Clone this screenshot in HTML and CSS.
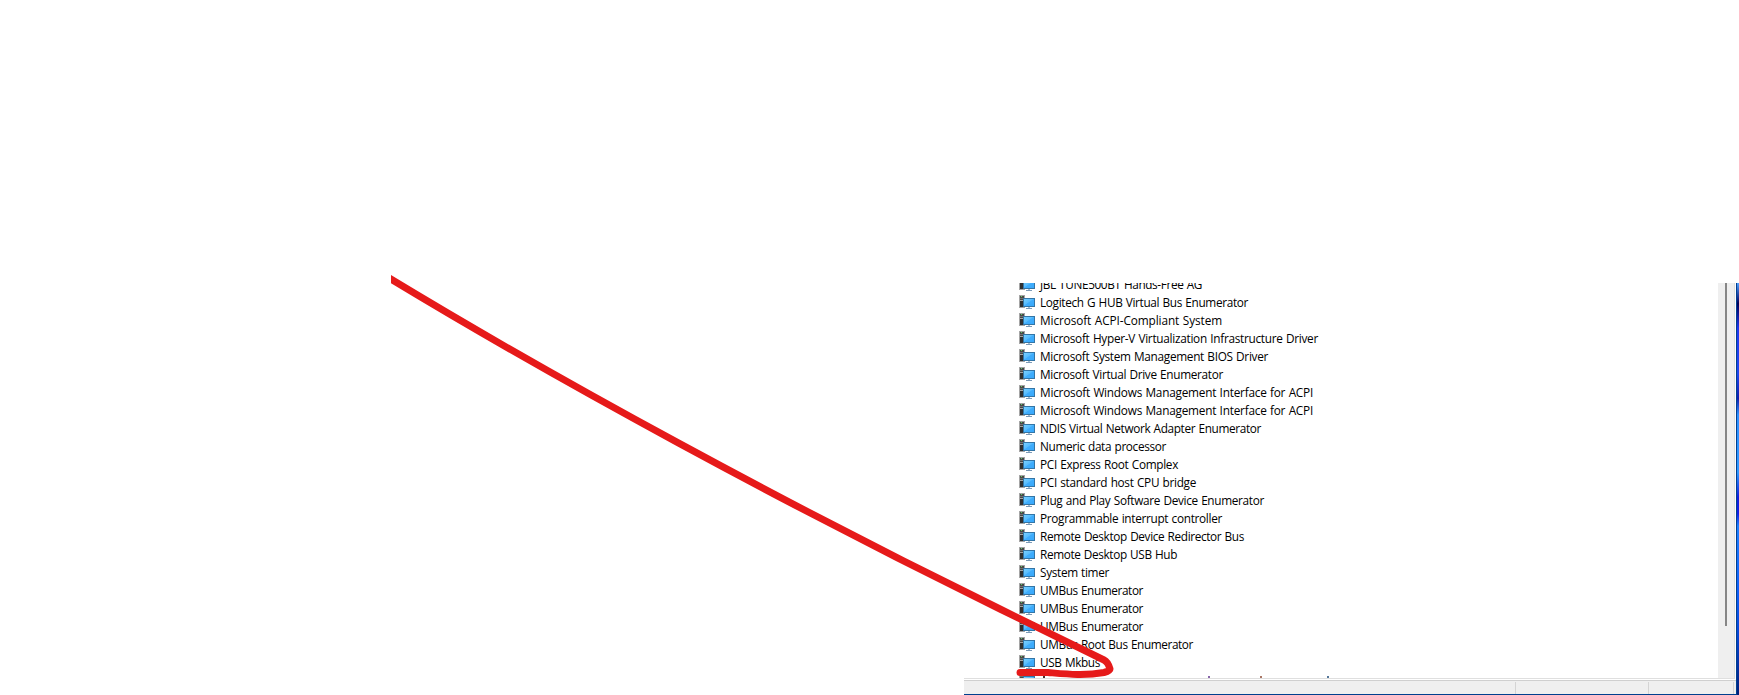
FILE: index.html
```html
<!DOCTYPE html>
<html lang="en"><head><meta charset="utf-8"><title>Device Manager</title><link rel="stylesheet" href="styles.css"></head>
<body>
<main class="canvas">
<svg class="defs" aria-hidden="true"><defs>
<linearGradient id="screen" x1="0" y1="0" x2="1" y2="1"><stop offset="0" stop-color="#78d0ff"/><stop offset=".45" stop-color="#58bcfd"/><stop offset=".5" stop-color="#40adfc"/><stop offset="1" stop-color="#38a8fb"/></linearGradient>
<symbol id="pc" viewBox="0 0 16 15"><path fill="#a5a5a5" d="M0 0h6v13H0z"/><path fill="#484848" d="M1 1h4v4H1z"/><path fill="#303030" d="M1 6h4v6H1z"/><path fill="#60d060" d="M2 1h1v1H2z"/><path fill="#707070" d="M1 3h4v1H1z"/><path fill="#3475a5" d="M4 3h12v9H4z"/><path fill="url(#screen)" d="M5 4h10v7H5z"/><path fill="#a9bdce" d="M9 12h2v1H9z"/><path fill="#7e9bb7" d="M7 13h6v1H7z"/></symbol>
</defs></svg>
<section class="window">
<div class="content">
<ul class="devices" id="devices"></ul>
<div class="scrollbar"><div class="thumb"></div></div>
</div>
<footer class="status"><span class="cell first"></span><span class="cell second"></span><span class="cell third"></span></footer>
</section>
<div class="wallpaper"></div>
<svg class="marker" viewBox="0 0 1739 695"><defs><clipPath id="edge"><path d="M391 0h1348v695H391z"/></clipPath></defs><path clip-path="url(#edge)" d="M380 272.500C560 382 790 506 1000 609L1104 660Q1108 662 1110 669Q1110 671 1104 672.500C1084 676 1066 674 1048 672.500L1020 672.500"/></svg>
</main>
<script src="app.js"></script>
</body></html>
```
FILE: styles.css
```css
body{margin:0;background:#fff;font-family:"Open Sans","Noto Sans",sans-serif}
.canvas{position:relative;box-sizing:border-box;width:1739px;height:695px;padding-top:283px;display:flex;justify-content:flex-end;overflow:hidden}
.defs{position:absolute;width:0;height:0}
.window{width:772px;height:412px;box-sizing:border-box;display:flex;flex-direction:column;border-bottom:1px solid #003f8e;background:#fff}
.content{height:396px;flex:none;margin-right:1px;box-sizing:border-box;display:flex;justify-content:space-between;overflow:hidden;border-right:1px solid #dfdfdf;border-bottom:1px solid #dfdfdf}
.devices{list-style:none;margin:-8px 0 0 55px;padding:0}
.device{height:18px;display:flex;align-items:center;gap:5px}
.icon{width:16px;height:15px;flex:none;margin-top:1px}
.name{font-size:11.8px;word-spacing:.6px;line-height:18px;white-space:nowrap;color:#000}
.peaks{width:300px;height:18px;flex:none}
.scrollbar{width:16px;background:#efefef}
.thumb{width:2px;height:343px;margin-left:7px;background:#868686}
.status{height:14px;margin-top:1px;flex:none;border-top:1px solid #cfcfcf;background:#efefef;display:flex;padding-top:1px;box-sizing:border-box}
.cell{box-sizing:border-box;border-right:1px solid #d4d4d4}
.first{width:552px}.second{width:133px}.third{width:85px}
.wallpaper{width:3px;border-left:1px solid #003f8e;box-sizing:border-box;background:linear-gradient(#50a0ff 0,#102080 4%,#00005a 5%,#2038f0 11%,#2048f0 22%,#1020b0 28%,#3090ff 32%,#3098ff 46%,#1020e0 52%,#1020e8 56%,#2080ff 59%,#1060f8 75%,#0848d8 85%,#00207a 100%)}
.marker{position:absolute;inset:0;width:1739px;height:695px;fill:none;stroke:#e61a1a;stroke-width:7;stroke-linecap:round;stroke-linejoin:round}
```
FILE: app.js
```js
const rows=[["JBL TUNE500BT Hands-Free AG",162],["Logitech G HUB Virtual Bus Enumerator",208],["Microsoft ACPI-Compliant System",182],["Microsoft Hyper-V Virtualization Infrastructure Driver",278],["Microsoft System Management BIOS Driver",228],["Microsoft Virtual Drive Enumerator",183],["Microsoft Windows Management Interface for ACPI",273],["Microsoft Windows Management Interface for ACPI",273],["NDIS Virtual Network Adapter Enumerator",221],["Numeric data processor",126],["PCI Express Root Complex",138],["PCI standard host CPU bridge",156],["Plug and Play Software Device Enumerator",224],["Programmable interrupt controller",182],["Remote Desktop Device Redirector Bus",204],["Remote Desktop USB Hub",137],["System timer",69],["UMBus Enumerator",103],["UMBus Enumerator",103],["UMBus Enumerator",103],["UMBus Root Bus Enumerator",153],["USB Mkbus",60]];
const list=document.getElementById("devices");
const icon='<svg class="icon"><use href="#pc"/></svg>';
for(const [label,width] of rows){
  const item=document.createElement("li");item.className="device";
  item.innerHTML=icon;
  const name=document.createElement("span");name.className="name";name.textContent=label;
  item.append(name);list.append(item);
  const natural=name.getBoundingClientRect().width;
  name.style.letterSpacing=(width-natural)/label.length+"px";
}
// The row below the fold shows only the tops of its letters.
const last=document.createElement("li");last.className="device";
last.innerHTML=icon+'<svg class="peaks"><path fill="#433" d="M3 5h2v2H3z"/><path fill="#86a" d="M168 5h2v2h-2z"/><path fill="#a76" d="M220 5h2v2h-2z"/><path fill="#579" d="M287 5h2v2h-2z"/></svg>';
list.append(last);
```
